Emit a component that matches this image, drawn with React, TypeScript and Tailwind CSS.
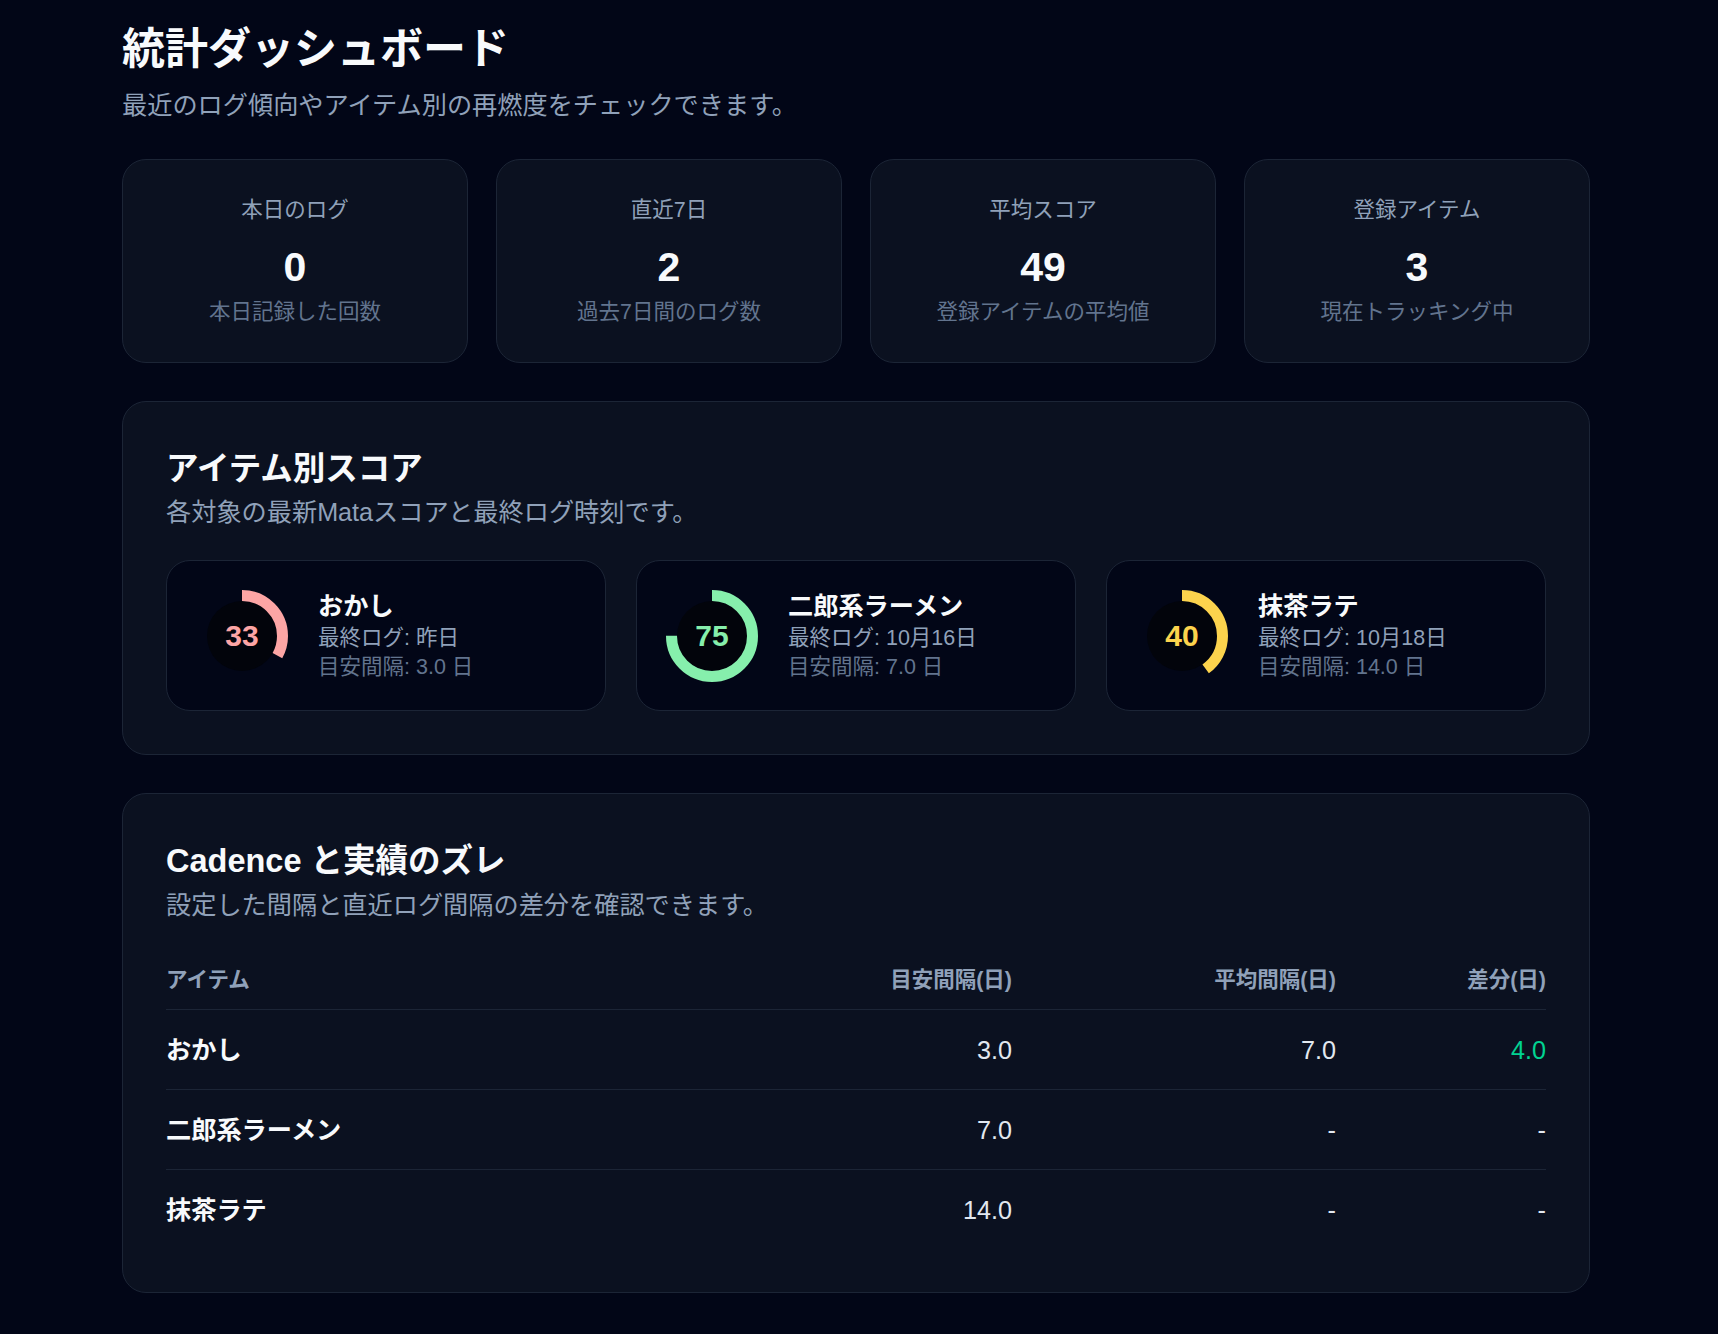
import React from "react";

interface Stat {
  label: string;
  value: string;
  note: string;
}

interface Item {
  name: string;
  score: number;
  last: string;
  interval: string;
  color: string;
  textClass: string;
}

interface Row {
  name: string;
  target: string;
  avg: string;
  diff: string;
  positive?: boolean;
}

const stats: Stat[] = [
  { label: "本日のログ", value: "0", note: "本日記録した回数" },
  { label: "直近7日", value: "2", note: "過去7日間のログ数" },
  { label: "平均スコア", value: "49", note: "登録アイテムの平均値" },
  { label: "登録アイテム", value: "3", note: "現在トラッキング中" },
];

const items: Item[] = [
  { name: "おかし", score: 33, last: "昨日", interval: "3.0 日", color: "#fca5a5", textClass: "text-[#fca5a5]" },
  { name: "二郎系ラーメン", score: 75, last: "10月16日", interval: "7.0 日", color: "#86efac", textClass: "text-[#86efac]" },
  { name: "抹茶ラテ", score: 40, last: "10月18日", interval: "14.0 日", color: "#fcd34d", textClass: "text-[#fcd34d]" },
];

const rows: Row[] = [
  { name: "おかし", target: "3.0", avg: "7.0", diff: "4.0", positive: true },
  { name: "二郎系ラーメン", target: "7.0", avg: "-", diff: "-" },
  { name: "抹茶ラテ", target: "14.0", avg: "-", diff: "-" },
];

function ScoreRing({ score, color, textClass }: { score: number; color: string; textClass: string }) {
  const r = 40.5;
  const c = 2 * Math.PI * r;
  return (
    <div className="relative w-[92px] h-[92px] shrink-0">
      <svg width="92" height="92" viewBox="0 0 92 92">
        <circle cx="46" cy="46" r="35" fill="#02040b" />
        <circle
          cx="46"
          cy="46"
          r={r}
          fill="none"
          stroke={color}
          strokeWidth="11"
          strokeDasharray={`${(c * score) / 100} ${c}`}
          transform="rotate(-90 46 46)"
        />
      </svg>
      <span className={`absolute inset-0 flex items-center justify-center text-[30px] font-bold ${textClass}`}>
        {score}
      </span>
    </div>
  );
}

export default function App() {
  return (
    <div
      className="min-h-screen bg-[#020617] text-slate-50"
      style={{ fontFamily: '"Liberation Sans", "Noto Sans CJK JP", sans-serif' }}
    >
      <main className="pl-[122px] pr-[128px] pt-[17px] pb-[40px]">
        {/* ヘッダー */}
        <h1 className="text-[43px] font-bold text-slate-50">統計ダッシュボード</h1>
        <p className="mt-[5px] text-[25.2px] text-slate-400">最近のログ傾向やアイテム別の再燃度をチェックできます。</p>

        {/* サマリー */}
        <div className="mt-[35px] grid grid-cols-4 gap-[28px]">
          {stats.map((s) => (
            <div
              key={s.label}
              className="rounded-3xl border border-[#1c2536] bg-[#0b1120] pt-[34px] pb-[34px] text-center"
            >
              <p className="text-[21.5px] text-slate-400">{s.label}</p>
              <p className="mt-[20px] mb-[8px] text-[41px] font-bold leading-none text-slate-50">{s.value}</p>
              <p className="text-[21.5px] text-slate-500">{s.note}</p>
            </div>
          ))}
        </div>

        {/* アイテム別スコア */}
        <section className="mt-[38px] rounded-3xl border border-[#1c2536] bg-[#0b1120] p-[43px]">
          <h2 className="text-[32.5px] font-bold text-slate-50">アイテム別スコア</h2>
          <p className="text-[25.2px] text-slate-400">各対象の最新Mataスコアと最終ログ時刻です。</p>
          <div className="mt-[29px] grid grid-cols-3 gap-[30px]">
            {items.map((it) => (
              <div
                key={it.name}
                className="flex items-center gap-[30px] rounded-3xl border border-[#1c2536] bg-[#020617] px-[29px] py-[28px]"
              >
                <ScoreRing score={it.score} color={it.color} textClass={it.textClass} />
                <div>
                  <p className="text-[25.2px] font-bold leading-[35px] text-slate-50">{it.name}</p>
                  <p className="text-[21.5px] leading-[29px] text-slate-400">最終ログ: {it.last}</p>
                  <p className="text-[21.5px] leading-[29px] text-slate-500">目安間隔: {it.interval}</p>
                </div>
              </div>
            ))}
          </div>
        </section>

        {/* Cadence */}
        <section className="mt-[38px] rounded-3xl border border-[#1c2536] bg-[#0b1120] p-[43px]">
          <h2 className="text-[32.5px] font-bold text-slate-50">Cadence と実績のズレ</h2>
          <p className="mt-[1px] text-[25.2px] text-slate-400">設定した間隔と直近ログ間隔の差分を確認できます。</p>

          <div className="mt-[26px]">
            <div className="grid grid-cols-[1fr_300px_324px_210px] border-b border-[#1c2536] py-[13px] text-[21.5px] font-bold text-slate-400">
              <span>アイテム</span>
              <span className="text-right">目安間隔(日)</span>
              <span className="text-right">平均間隔(日)</span>
              <span className="text-right">差分(日)</span>
            </div>
            <div className="divide-y divide-[#1c2536]">
              {rows.map((r) => (
                <div key={r.name} className="grid grid-cols-[1fr_300px_324px_210px] pt-[22px] pb-[19px] text-[25.2px]">
                  <span className="font-bold text-slate-50">{r.name}</span>
                  <span className="text-right text-slate-200">{r.target}</span>
                  <span className="text-right text-slate-200">{r.avg}</span>
                  <span className={`text-right ${r.positive ? "text-emerald-400" : "text-slate-200"}`}>{r.diff}</span>
                </div>
              ))}
            </div>
          </div>
        </section>
      </main>
    </div>
  );
}
